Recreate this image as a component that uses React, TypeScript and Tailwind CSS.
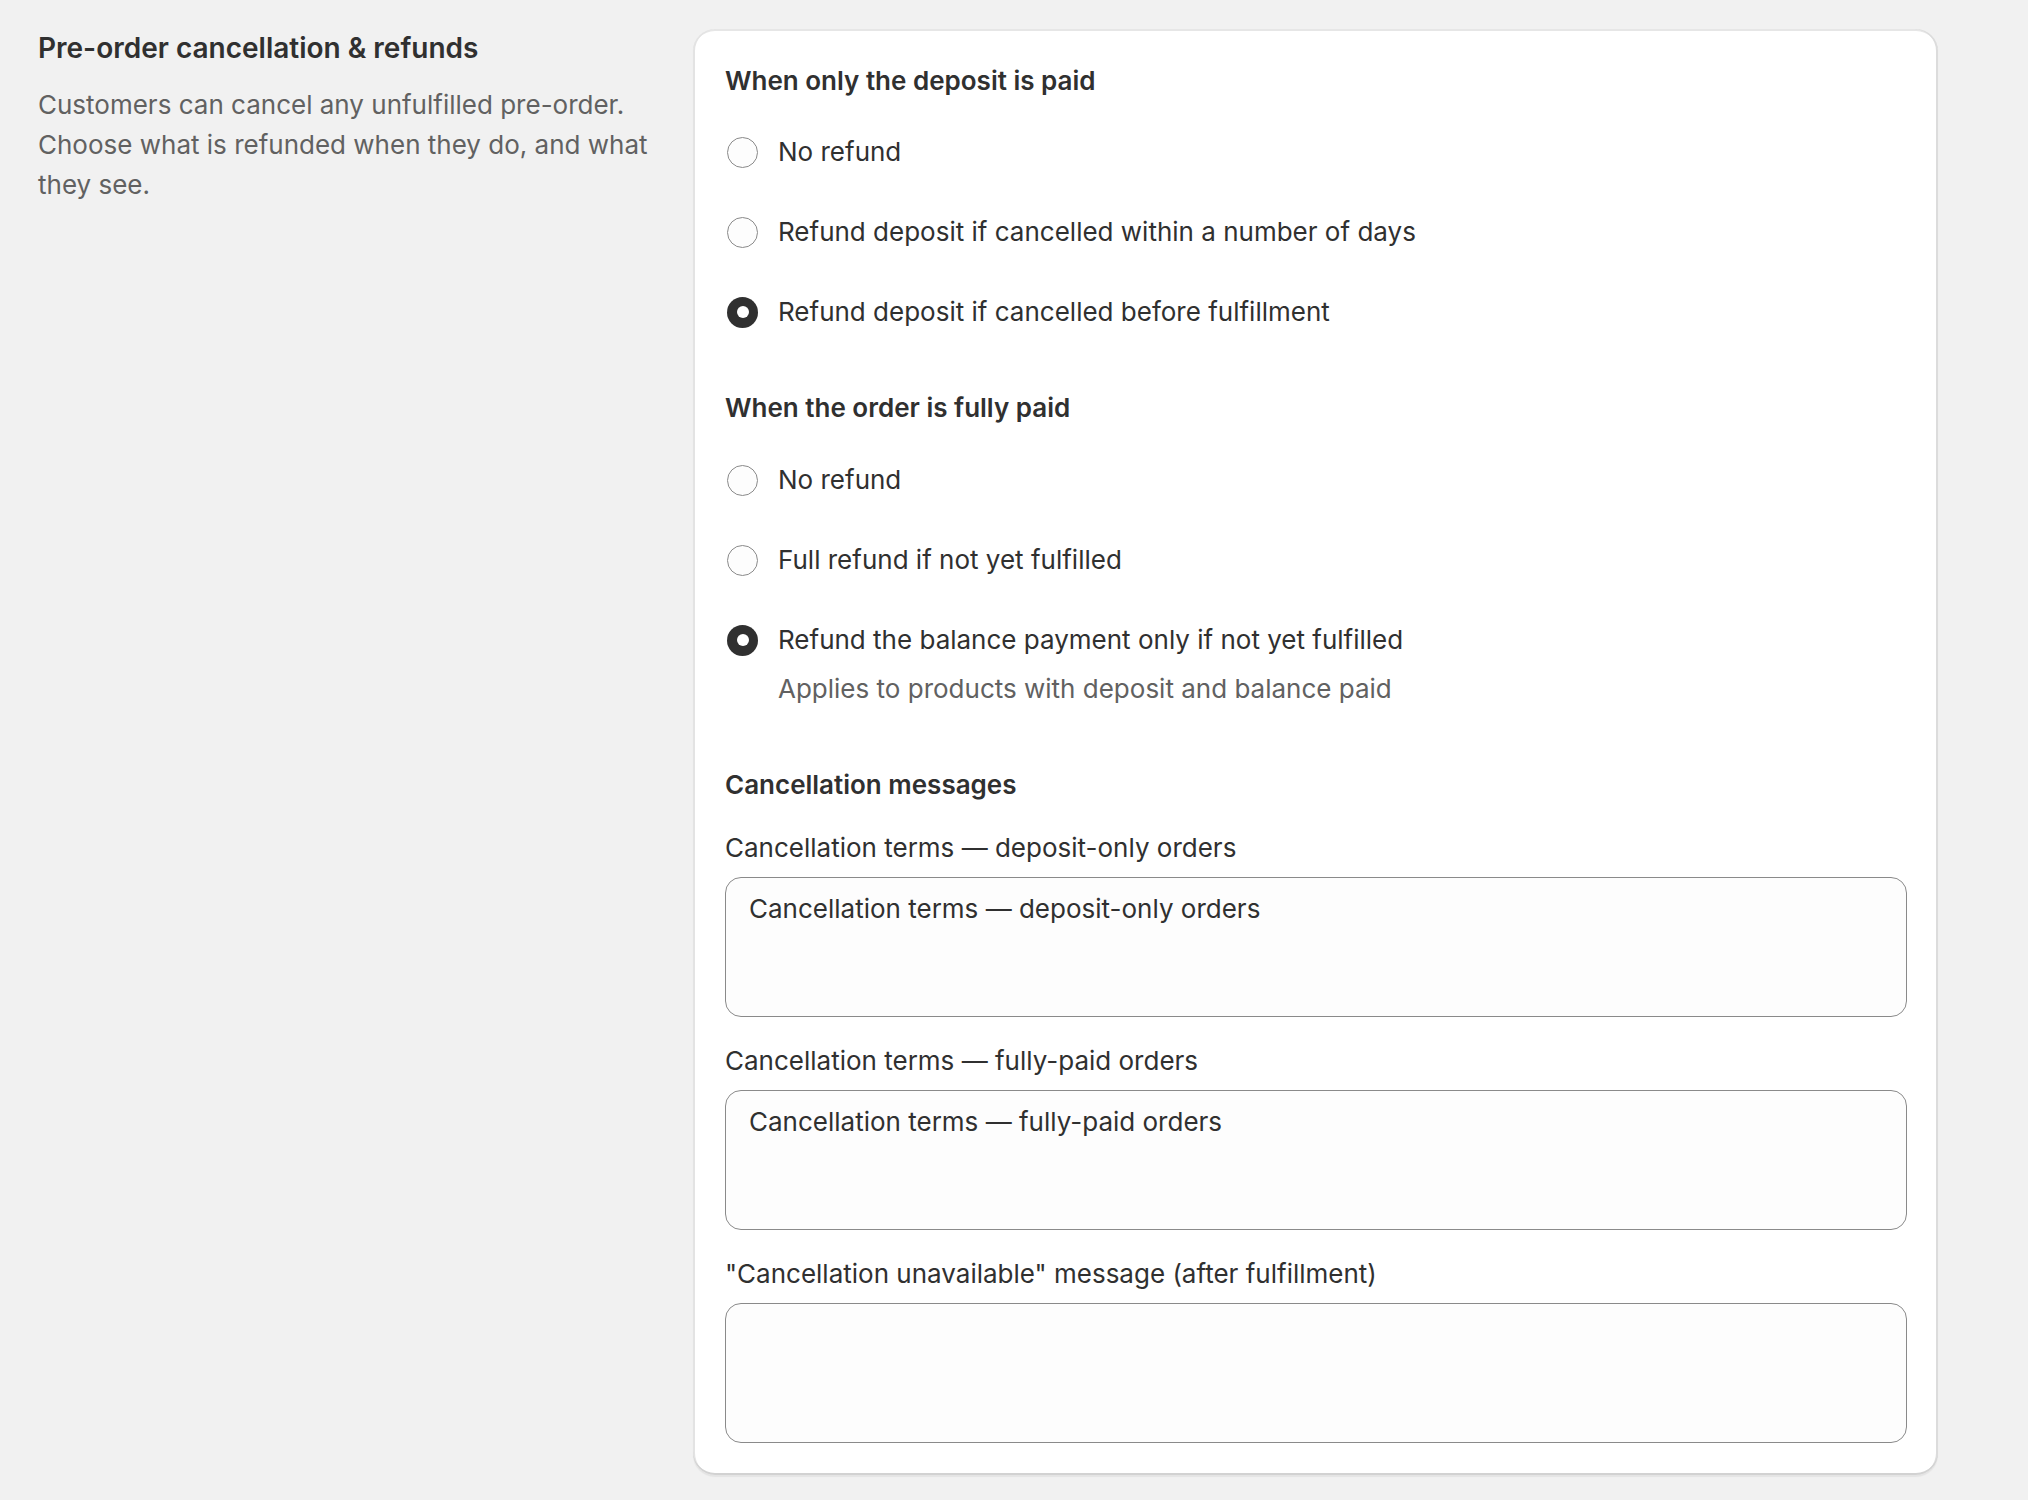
import React from "react";

const font = { fontFamily: "Inter, 'Noto Sans', sans-serif" };

function Radio({ checked, label, help }: { checked?: boolean; label: string; help?: string }) {
  return (
    <div className="flex flex-col">
      <div className="flex items-center">
        <div className="w-[35px] h-[40px] flex items-center justify-center shrink-0">
          {checked ? (
            <div className="w-[31px] h-[31px] rounded-full bg-[#303030] flex items-center justify-center">
              <div className="w-[12px] h-[12px] rounded-full bg-white" />
            </div>
          ) : (
            <div className="w-[31px] h-[31px] rounded-full border border-[#8a8a8a] bg-[#fdfdfd]" />
          )}
        </div>
        <span className="ml-[18px] text-[26px] leading-[40px] text-[#303030]">{label}</span>
      </div>
      {help && (
        <div className="pl-[53px] mt-[9px] text-[26px] leading-[40px] text-[#616161]">{help}</div>
      )}
    </div>
  );
}

function Field({ label, value }: { label: string; value: string }) {
  return (
    <div className="flex flex-col">
      <div className="text-[26px] leading-[40px] text-[#303030]">{label}</div>
      <textarea
        readOnly
        value={value}
        className="mt-[9px] h-[140px] w-full resize-none rounded-[16px] border border-[#8a8a8a] bg-[#fdfdfd] px-[23px] pt-[11px] text-[26px] leading-[40px] text-[#303030] outline-none"
        style={font}
      />
    </div>
  );
}

export default function App() {
  return (
    <div className="min-h-[1500px] w-full bg-[#f1f1f1]" style={font}>
      <div className="flex pl-[38px] pt-[29px]">
        <div className="w-[632px] shrink-0 pr-[10px]">
          <h2 className="text-[28px] leading-[40px] font-semibold text-[#303030] -mt-[1px]">
            Pre-order cancellation &amp; refunds
          </h2>
          <p className="mt-[17px] text-[26px] leading-[40px] text-[#616161]">
            Customers can cancel any unfulfilled pre-order. Choose what is refunded when they do, and what they see.
          </p>
        </div>
        <div className="ml-[23px] w-[1245px] shrink-0 rounded-[22px] bg-white pl-[32px] pr-[31px] pt-[32px] pb-[32px] shadow-[inset_0_-2px_0_0_#d2d2d2,inset_2px_0_0_0_#e3e3e3,inset_-2px_0_0_0_#dcdcdc,inset_0_2px_0_0_#e6e6e6,0_2px_1px_0_rgba(26,26,26,0.06)]">
          <section className="flex flex-col">
            <h3 className="text-[26px] leading-[40px] font-semibold text-[#303030]">When only the deposit is paid</h3>
            <div className="mt-[31px] flex flex-col gap-[40px]">
              <Radio label="No refund" />
              <Radio label="Refund deposit if cancelled within a number of days" />
              <Radio checked label="Refund deposit if cancelled before fulfillment" />
            </div>
          </section>
          <section className="mt-[56px] flex flex-col">
            <h3 className="text-[26px] leading-[40px] font-semibold text-[#303030]">When the order is fully paid</h3>
            <div className="mt-[32px] flex flex-col gap-[40px]">
              <Radio label="No refund" />
              <Radio label="Full refund if not yet fulfilled" />
              <Radio
                checked
                label="Refund the balance payment only if not yet fulfilled"
                help="Applies to products with deposit and balance paid"
              />
            </div>
          </section>
          <section className="mt-[56px] flex flex-col">
            <h3 className="text-[26px] leading-[40px] font-semibold text-[#303030]">Cancellation messages</h3>
            <div className="mt-[23px] flex flex-col gap-[24px]">
              <Field label="Cancellation terms — deposit-only orders" value="Cancellation terms — deposit-only orders" />
              <Field label="Cancellation terms — fully-paid orders" value="Cancellation terms — fully-paid orders" />
              <Field label={'"Cancellation unavailable" message (after fulfillment)'} value="" />
            </div>
          </section>
        </div>
      </div>
    </div>
  );
}
